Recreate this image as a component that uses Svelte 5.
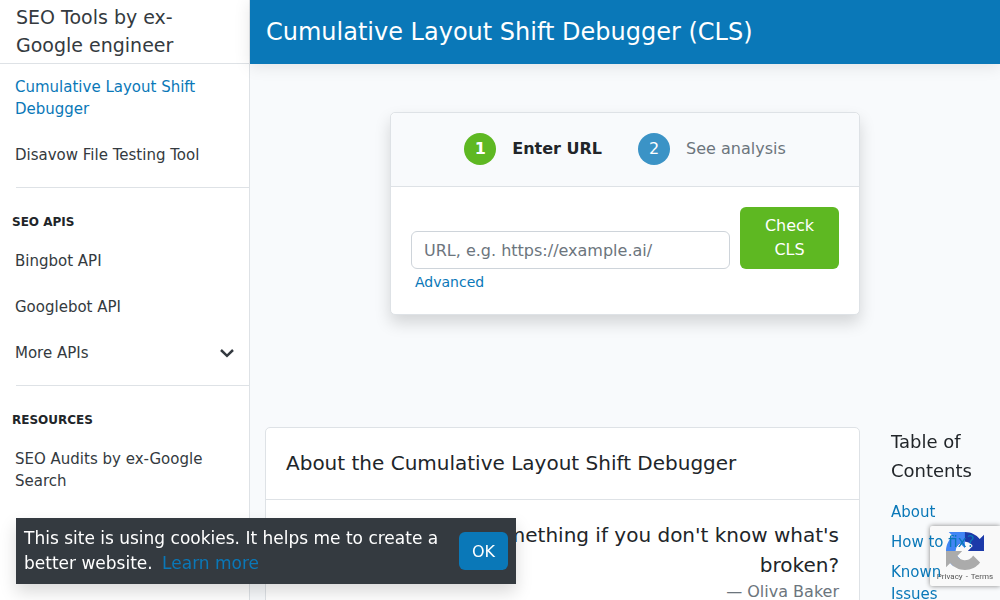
<script lang="ts">
  type NavItem = { label: string; href: string; active?: boolean };

  const tools: NavItem[] = [
    { label: 'Cumulative Layout Shift Debugger', href: '#cls', active: true },
    { label: 'Disavow File Testing Tool', href: '#disavow' },
  ];
  const apis: NavItem[] = [
    { label: 'Bingbot API', href: '#bingbot' },
    { label: 'Googlebot API', href: '#googlebot' },
  ];
  const resources: NavItem[] = [
    { label: 'SEO Audits by ex-Google Search', href: '#audits' },
  ];
  const toc: NavItem[] = [
    { label: 'About', href: '#about' },
    { label: 'How to fix?', href: '#fix' },
    { label: 'Known Issues', href: '#issues' },
  ];

  let url = $state('');
  let cookiesOpen = $state(true);
</script>

{#snippet links(items: NavItem[])}
  {#each items as item}
    <a class="nav-link" class:active={item.active} href={item.href}>{item.label}</a>
  {/each}
{/snippet}

<div class="layout">
  <aside class="sidebar">
    <a class="brand" href="#home">SEO Tools by ex-Google engineer</a>
    <nav>
      {@render links(tools)}
      <hr />
      <h6>SEO APIs</h6>
      {@render links(apis)}
      <button class="nav-link more" type="button">
        More APIs
        <svg width="14" height="10" viewBox="0 0 14 10" aria-hidden="true">
          <path d="M1 2 7 7.800 13 2" fill="none" stroke="currentColor" stroke-width="2.500" />
        </svg>
      </button>
      <hr />
      <h6>Resources</h6>
      {@render links(resources)}
    </nav>
  </aside>

  <div class="page">
    <header class="topbar">
      <h1>Cumulative Layout Shift Debugger (CLS)</h1>
    </header>

    <main>
      <section class="card checker">
        <ol class="steps">
          <li class="step current"><span class="number">1</span>Enter URL</li>
          <li class="step"><span class="number">2</span>See analysis</li>
        </ol>
        <form onsubmit={(e) => e.preventDefault()}>
          <div class="fields">
            <input type="text" aria-label="URL" placeholder="URL, e.g. https://example.ai/" bind:value={url} />
            <button class="check" type="submit">Check CLS</button>
          </div>
          <a class="advanced" href="#advanced">Advanced</a>
        </form>
      </section>

      <div class="content">
        <article class="card about" id="about">
          <h2>About the Cumulative Layout Shift Debugger</h2>
          <blockquote>
            <p>How can you fix something if you don't know what's broken?</p>
            <footer>— Oliva Baker</footer>
          </blockquote>
        </article>
        <nav class="toc">
          <h3>Table of Contents</h3>
          {#each toc as item}
            <a href={item.href}>{item.label}</a>
          {/each}
        </nav>
      </div>
    </main>
  </div>
</div>

<div class="recaptcha">
  <svg width="38" height="38" viewBox="0 0 64 64" aria-hidden="true">
    <path fill="#1c3aa9" d="M64 31.955l-.033-1.370V4.687l-7.160 7.160C50.948 4.674 42.033.093 32.050.093c-10.400 0-19.622 4.960-25.458 12.640l11.736 11.860a15.550 15.550 0 0 1 4.754-5.334c2.050-1.600 4.952-2.906 8.968-2.906.485 0 .860.057 1.135.163 4.976.393 9.288 3.140 11.828 7.124l-8.307 8.307L64 31.953" />
    <path fill="#4285f4" d="M31.862.094l-1.370.033H4.594l7.160 7.160C4.580 13.147 0 22.060 0 32.046c0 10.400 4.960 19.622 12.640 25.458L24.500 45.768a15.550 15.550 0 0 1-5.334-4.754c-1.600-2.050-2.906-4.952-2.906-8.968 0-.485.057-.860.163-1.135.393-4.976 3.140-9.288 7.124-11.828l8.307 8.307L31.860.095" />
    <path fill="#ababab" d="M.001 32.045l.033 1.370v25.898l7.160-7.160c5.860 7.173 14.774 11.754 24.760 11.754 10.400 0 19.622-4.960 25.458-12.640l-11.736-11.860a15.550 15.550 0 0 1-4.754 5.334c-2.050 1.600-4.952 2.906-8.968 2.906-.485 0-.860-.057-1.135-.163-4.976-.393-9.288-3.140-11.828-7.124l8.307-8.307c-10.522.040-22.400.066-27.295-.005" />
  </svg>
  <div class="legal"><a href="#privacy">Privacy</a> <span>-</span> <a href="#terms">Terms</a></div>
</div>

{#if cookiesOpen}
  <div class="cookies">
    <p>This site is using cookies. It helps me to create a better website. <a href="#learn">Learn more</a></p>
    <button type="button" onclick={() => (cookiesOpen = false)}>OK</button>
  </div>
{/if}

<style>
  :global(body) {
    background: #f8fafc;
    color: #212529;
    font-family: 'DejaVu Sans', sans-serif;
    font-size: 16px;
    line-height: 24px;
  }
  * {
    box-sizing: border-box;
  }
  a {
    color: #0a78b8;
    text-decoration: none;
  }
  h1, h2, h3, h6, p, ol, blockquote {
    margin: 0;
    padding: 0;
    font-weight: 400;
  }
  button, input {
    font: inherit;
  }
  button {
    cursor: pointer;
  }

  .layout {
    display: flex;
    min-height: 100vh;
  }
  .sidebar {
    flex: 0 0 250px;
    background: #fff;
    border-right: 1px solid #dee2e6;
  }
  .brand {
    display: flex;
    align-items: center;
    height: 64px;
    padding: 0 16px 2px;
    border-bottom: 1px solid #dee2e6;
    color: #343a40;
    font-size: 19px;
    line-height: 28px;
  }
  .nav-link {
    display: block;
    padding: 12px 15px;
    color: #343a40;
    font-size: 15px;
    line-height: 22px;
  }
  .nav-link.active {
    color: #0a78b8;
  }
  .more {
    display: flex;
    align-items: center;
    justify-content: space-between;
    width: 100%;
    border: 0;
    background: none;
  }
  hr {
    margin: 9px 0 21px 16px;
    border: 0;
    border-top: 1px solid #dee2e6;
  }
  h6 {
    margin-bottom: 3px;
    padding: 0 12px;
    font-size: 12px;
    font-weight: 700;
    line-height: 26px;
    text-transform: uppercase;
  }

  .page {
    flex: 1;
    min-width: 0;
  }
  .topbar {
    display: flex;
    align-items: center;
    height: 64px;
    padding: 0 16px;
    background: #0a78b8;
    color: #fff;
    box-shadow: 0 2px 16px rgba(0, 0, 0, 0.1);
  }
  h1 {
    font-size: 24px;
    line-height: 28px;
  }

  .card {
    border: 1px solid #dee2e6;
    border-radius: 5px;
    background: #fff;
  }
  .checker {
    max-width: 470px;
    margin: 48px auto 112px;
    box-shadow: 0 8px 16px rgba(0, 0, 0, 0.15);
  }
  .steps {
    display: flex;
    justify-content: center;
    gap: 36px;
    padding: 20px 20px 21px;
    border-bottom: 1px solid #dee2e6;
    border-radius: 5px 5px 0 0;
    background: #f8fafc;
    list-style: none;
  }
  .step {
    display: flex;
    align-items: center;
    gap: 16px;
    color: #6c757d;
  }
  .step.current {
    color: #212529;
    font-weight: 700;
  }
  .number {
    width: 32px;
    border-radius: 50%;
    background: #3b93c6;
    color: #fff;
    line-height: 32px;
    text-align: center;
  }
  .current .number {
    background: #5eb822;
  }
  form {
    padding: 20px;
  }
  .fields {
    display: flex;
    align-items: flex-end;
    gap: 10px;
  }
  input {
    flex: 1;
    min-width: 0;
    height: 38px;
    padding: 0 12px;
    border: 1px solid #ced4da;
    border-radius: 6px;
    background: #fff;
    color: #212529;
  }
  input::placeholder {
    color: #6c757d;
    opacity: 1;
  }
  .check {
    width: 99px;
    padding: 7px 16px;
    border: 0;
    border-radius: 6px;
    background: #5eb822;
    color: #fff;
  }
  .advanced {
    display: block;
    padding: 1px 4px 0;
    font-size: 14px;
  }

  .content {
    display: flex;
    align-items: flex-start;
    gap: 31px;
    padding: 0 15px;
  }
  .about {
    flex: 1;
  }
  h2 {
    padding: 20px 20px 21px;
    border-bottom: 1px solid #dee2e6;
    font-size: 20px;
    line-height: 30px;
  }
  blockquote {
    padding: 20px;
    font-size: 20px;
    line-height: 30px;
    text-align: right;
  }
  blockquote footer {
    color: #6c757d;
    font-size: 16px;
    line-height: 24px;
  }
  .toc {
    position: relative;
    z-index: 2;
    flex: 0 0 94px;
  }
  h3 {
    margin-bottom: 16px;
    font-size: 18px;
    line-height: 29px;
  }
  .toc a {
    display: block;
    margin-bottom: 8px;
    font-size: 15px;
    line-height: 22px;
  }

  .recaptcha {
    position: fixed;
    right: 0;
    bottom: 14px;
    z-index: 1;
    width: 70px;
    height: 60px;
    padding-top: 6px;
    border-radius: 2px 0 0 2px;
    background: #f9f9f9;
    box-shadow: 0 0 5px gray;
    text-align: center;
    line-height: 14px;
  }
  .recaptcha svg {
    display: block;
    margin: 0 auto;
  }
  .legal, .legal a {
    color: #555;
    font-family: Roboto, sans-serif;
    font-size: 8px;
    white-space: nowrap;
  }
  .legal span {
    margin: 0 1px;
  }

  .cookies {
    position: fixed;
    bottom: 16px;
    left: 16px;
    z-index: 3;
    display: flex;
    align-items: center;
    gap: 16px;
    width: 500px;
    max-width: calc(100% - 32px);
    padding: 8px;
    background: #343a40;
    color: #fff;
    box-shadow: 0 8px 16px rgba(0, 0, 0, 0.15);
    font-size: 17px;
    line-height: 25px;
  }
  .cookies p {
    flex: 1;
  }
  .cookies a {
    margin-left: 4px;
  }
  .cookies button {
    height: 38px;
    padding: 0 13px;
    border: 0;
    border-radius: 6px;
    background: #0a78b8;
    color: #fff;
    font-size: 16px;
  }
</style>
